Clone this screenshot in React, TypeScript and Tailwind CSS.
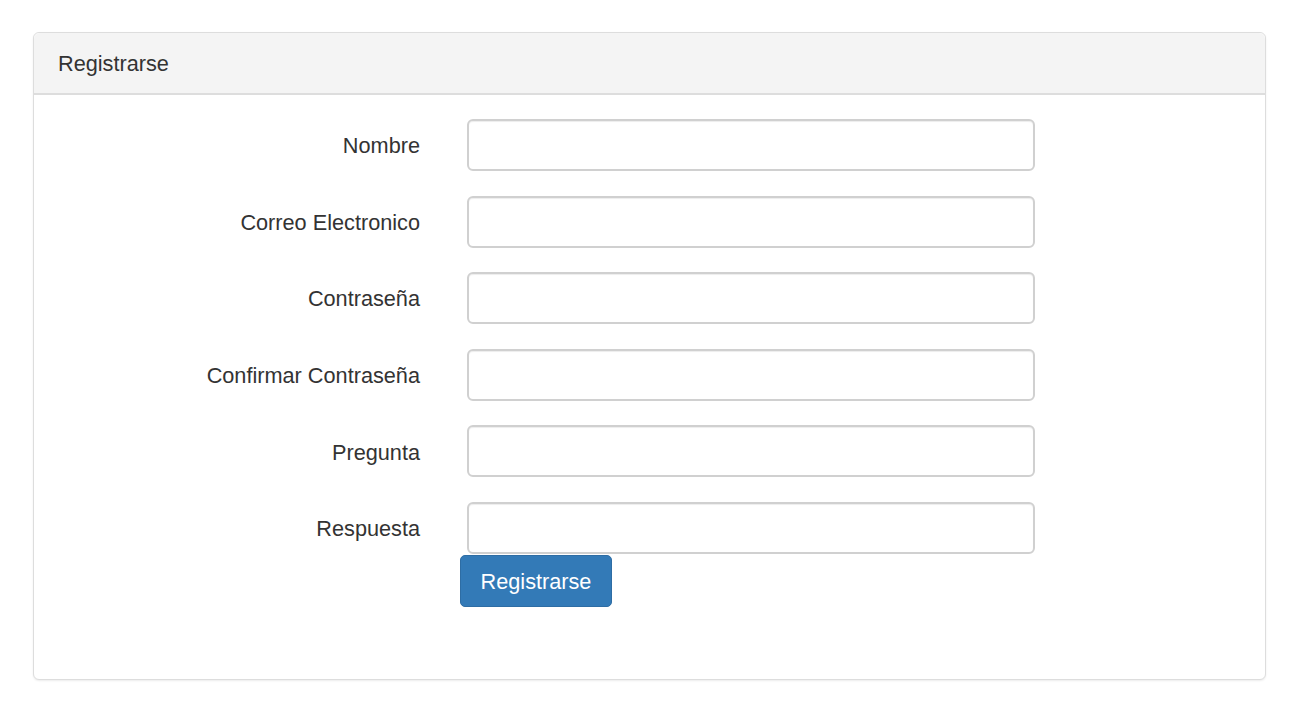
const fields = [
  "Nombre",
  "Correo Electronico",
  "Contraseña",
  "Confirmar Contraseña",
  "Pregunta",
  "Respuesta",
];

export default function App() {
  return (
    <div
      className="min-h-screen bg-white pt-[32px] pl-[33px] text-[#333]"
      style={{ fontFamily: '"Liberation Sans", Arial, sans-serif' }}
    >
      <div className="w-[1233px] h-[648px] rounded-[6px] border border-[#dddddd] bg-white shadow-[0_1px_2px_rgba(0,0,0,0.08)]">
        {/* header */}
        <div className="h-[62px] rounded-t-[6px] border-b-2 border-[#dddddd] bg-[#f4f4f4] pl-[24px] pt-[2px] flex items-center">
          <h3 className="text-[21.7px] leading-none">Registrarse</h3>
        </div>

        {/* body */}
        <form className="pt-[24px]" onSubmit={(e) => e.preventDefault()}>
          <div className="flex flex-col gap-[24.6px]">
            {fields.map((f) => (
              <div key={f} className="flex items-center">
                <label className="w-[386px] pt-[2px] text-right text-[21.7px] leading-none">
                  {f}
                </label>
                <input
                  type="text"
                  className="ml-[47px] w-[568px] h-[52px] rounded-[6px] border-2 border-[#d0d0d0] bg-white shadow-[inset_0_1px_1px_rgba(0,0,0,0.075)] outline-none px-4 text-[21px]"
                />
              </div>
            ))}
          </div>
          <button
            type="submit"
            className="ml-[426px] mt-[1px] w-[152px] h-[52px] rounded-[5px] border border-[#2e6da4] bg-[#337ab7] pt-[2px] text-white text-[21.7px]"
          >
            Registrarse
          </button>
        </form>
      </div>
    </div>
  );
}
